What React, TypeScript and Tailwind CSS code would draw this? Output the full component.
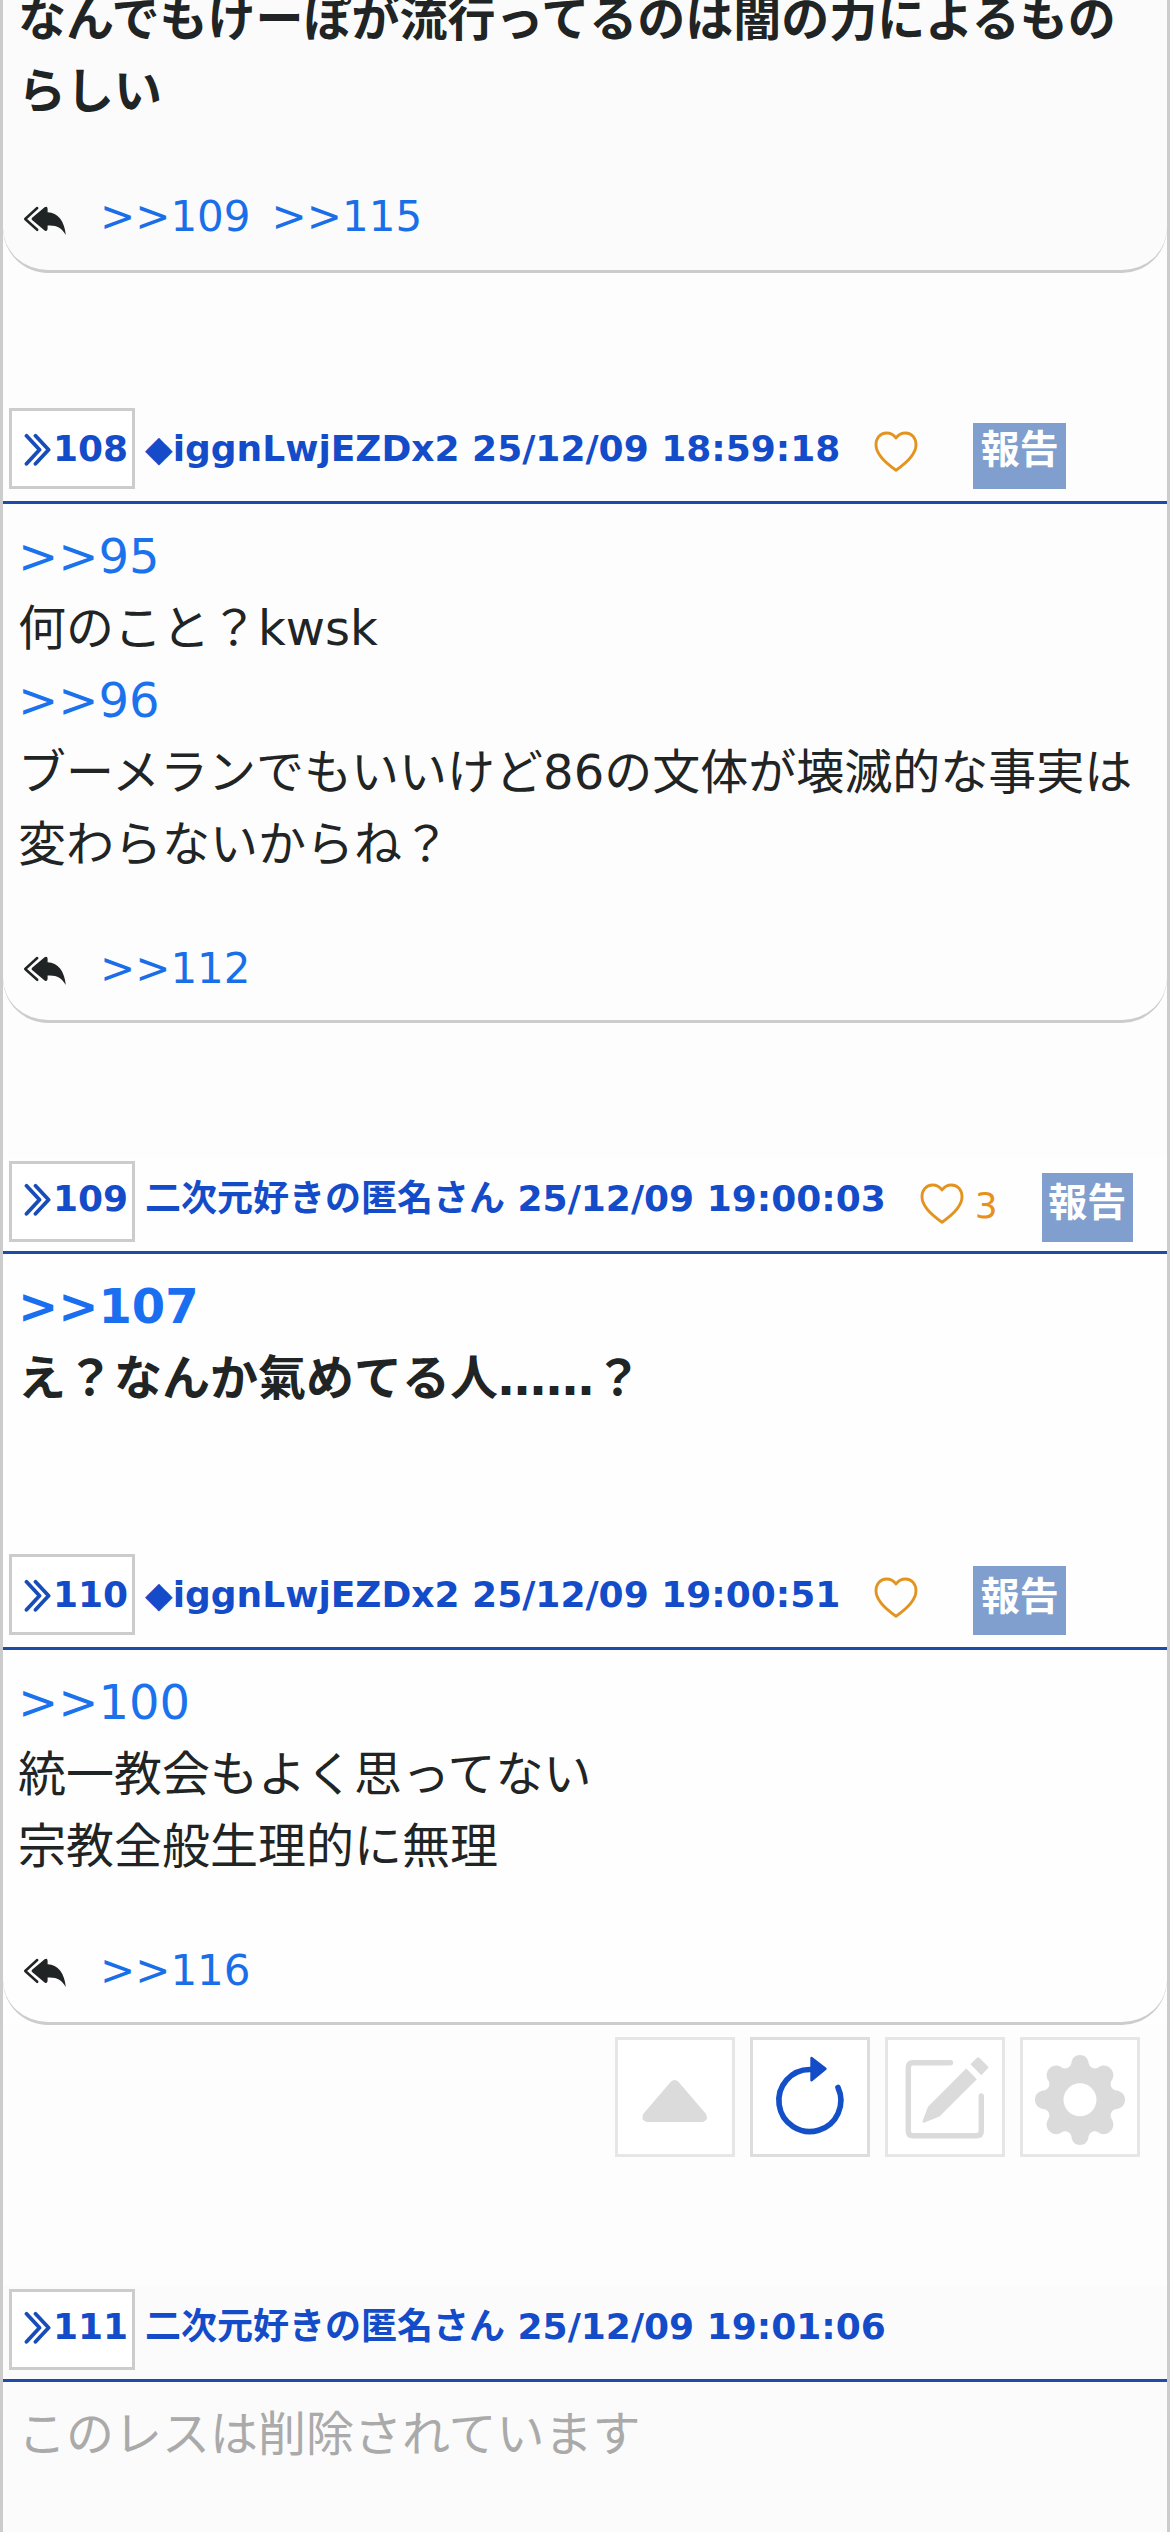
import React from "react";

const FONT = "font-['DejaVu_Sans','Noto_Sans_CJK_JP',sans-serif]";

function Chevrons() {
  return (
    <svg width="27" height="33" viewBox="0 0 27 33" fill="none" stroke="#184db8" strokeWidth="3.8" strokeLinecap="round" strokeLinejoin="round">
      <path d="M2.5 2.8 L15.5 16.8 L2.5 30.8" />
      <path d="M11.5 2.8 L24.6 16.8 L11.5 30.8" />
    </svg>
  );
}

function Heart() {
  return (
    <svg width="44" height="42" viewBox="0 0 44 42" fill="none" stroke="#e39420" strokeWidth="2.9" strokeLinejoin="round" className="shrink-0">
      <path d="M22 7 C19.5 3.4 16.5 2 12.5 2 C6.2 2 2 7.2 2 13.8 C2 23 11.5 32 22 39.2 C32.5 32 42 23 42 13.8 C42 7.2 37.8 2 31.5 2 C27.5 2 24.5 3.4 22 7 Z" />
    </svg>
  );
}

function ReplyIcon() {
  return (
    <svg width="44" height="30" viewBox="0 0 44 30" fill="none" className="shrink-0">
      <path d="M14.2 2 L2.2 13 L14.2 23.8" stroke="#212424" strokeWidth="2.5" strokeLinecap="round" strokeLinejoin="round" />
      <path d="M9.4 11.6 L21.6 1.2 Q24.4 -0.4 24.6 2.8 L24.6 6.2 C35 6.6 41.5 15 42.8 29 C38.5 21.6 33.5 19 24.6 19.6 L24.6 22.8 Q24.4 26 21.6 24.4 L9.4 14.2 Q7.8 12.9 9.4 11.6 Z" fill="#212424" />
    </svg>
  );
}

function Replies({ ids, low }: { ids: number[]; low?: boolean }) {
  return (
    <div className="flex h-[63px] items-center">
      <div className={`pl-[5px] ${low ? "pt-[8px]" : "pt-[4px]"}`}>
        <ReplyIcon />
      </div>
      <div className="ml-[33px] flex gap-[21px] text-[42px] leading-[63px] text-[#1a6fe8]">
        {ids.map((id) => (
          <a key={id}>{`>>${id}`}</a>
        ))}
      </div>
    </div>
  );
}

const REPORT_BOX = {
  a: "ml-[55px] mt-[15px] h-[66px] w-[93px]",
  b: "ml-[44px] mt-[12px] h-[69px] w-[91px] pt-[3px]",
  c: "ml-[55px] mt-[12px] h-[69px] w-[93px] pt-[4px]",
};

function Header({ id, name, gap, likes, report }: { id: number; name: string; gap: "tall" | "short"; likes?: string; report?: "a" | "b" | "c" }) {
  const tall = gap === "tall";
  return (
    <header className={`flex h-[96px] border-b-[3px] border-[#1c4ca8] pl-[6px] text-[36px] font-bold leading-[54px] text-[#134bc8] ${tall ? "" : "pt-[3px]"}`}>
      <div className={`flex h-[81px] w-[126px] shrink-0 border-[3px] border-[#ccc] bg-white pl-[12px] ${tall ? "pt-[11px]" : "pt-[8px]"}`}>
        <div className="pt-[11px]">
          <Chevrons />
        </div>
        <span className="ml-[2px]">{id}</span>
      </div>
      <div className={`ml-[10px] whitespace-pre ${tall ? "pt-[14px]" : "pt-[11px]"}`}>{name}</div>
      {report && (
        <>
          <div className={`ml-[34px] flex ${tall ? "pt-[23px]" : "pt-[22px]"}`}>
            <Heart />
            {likes && <span className="-mt-[4px] ml-[11px] font-normal text-[#e8901c]">{likes}</span>}
          </div>
          <div className={`bg-[#809fcf] text-center text-[39px] text-white ${REPORT_BOX[report]}`}>報告</div>
        </>
      )}
    </header>
  );
}

const BODY = "px-[15px] text-[48px] leading-[72px] text-[#212424]";
const CARD = "rounded-b-[45px] border-b-[3px] border-[#ccc]";
const LINK = "text-[#1a72ec]";

function IconButton({ active, children }: { active?: boolean; children: React.ReactNode }) {
  return (
    <button className={`flex size-[120px] items-center justify-center border-[3px] bg-white ${active ? "border-[#ddd]" : "border-[#e6e6e6]"}`}>
      {children}
    </button>
  );
}

function Toolbar() {
  return (
    <div className="absolute left-[612px] top-[2037px] flex gap-[15px]">
      <IconButton>
        <svg width="114" height="114" viewBox="0 0 114 114">
          <path d="M52.6 42 Q56.6 38 60.6 42 L87.6 73.5 Q91.5 79.5 85 82 L28.5 82 Q22 79.5 25.6 73.5 Z" fill="#dbdbdb" />
        </svg>
      </IconButton>
      <IconButton active>
        <svg width="114" height="114" viewBox="0 0 114 114">
          <path d="M57 29.5 A31 31 0 1 0 85 47.5" fill="none" stroke="#134fc6" strokeWidth="5.6" strokeLinecap="round" />
          <path d="M58.5 18 L72.5 28.8 L58.5 40.3 Z" fill="#134bc8" stroke="#134bc8" strokeWidth="2.4" strokeLinejoin="round" />
        </svg>
      </IconButton>
      <IconButton>
        <svg width="114" height="114" viewBox="0 0 114 114">
          <path d="M62.5 22.7 H25 Q20.3 22.7 20.3 27.5 V91 Q20.3 95.8 25 95.8 H88.5 Q93.3 95.8 93.3 91 V56" fill="none" stroke="#dbdbdb" strokeWidth="5.4" strokeLinecap="round" />
          <path d="M78.2 28.5 L88.8 39.2 L51.5 76.5 L36 82.7 Q34.2 83 34.6 81 L40 66.7 Z" fill="#dbdbdb" />
          <path d="M82.5 24.3 L89 17.8 Q90.2 16.8 91.3 17.8 L99.8 26.2 Q100.8 27.4 99.8 28.6 L93.3 35.2 Z" fill="#dbdbdb" />
        </svg>
      </IconButton>
      <IconButton>
        <svg width="114" height="114" viewBox="0 0 114 114" fill="#dbdbdb">
          <path
            fillRule="evenodd"
            d="M57 15 C62 15 65 18.4 65.5 22.6 C66.2 27.6 71.5 30 75.5 27.2 C79 24.8 84 24.8 87.5 28.4 C91 31.9 91.2 36.8 88.8 40.3 C86 44.4 88.4 49.8 93.4 50.5 C98 51 102 54.3 102 59.8 C102 65 98.2 68.5 93.4 69.1 C88.4 69.8 86 75.1 88.8 79.2 C91.2 82.8 91 87.8 87.5 91.3 C84 94.8 79 94.9 75.5 92.5 C71.4 89.6 66.2 92 65.5 97 C65 101.6 62 105 57 105 C52 105 49 101.6 48.5 97 C47.8 92 42.6 89.6 38.5 92.5 C35 94.9 30 94.8 26.5 91.3 C23 87.8 22.8 82.8 25.2 79.2 C28 75.1 25.6 69.8 20.6 69.1 C15.8 68.5 12 65 12 59.8 C12 54.3 16 51 20.6 50.5 C25.6 49.8 28 44.4 25.2 40.3 C22.8 36.8 23 31.9 26.5 28.4 C30 24.8 35 24.8 38.5 27.2 C42.5 30 47.8 27.6 48.5 22.6 C49 18.4 52 15 57 15 Z M57 43.3 A16.5 16.5 0 1 0 57 76.3 A16.5 16.5 0 1 0 57 43.3 Z"
          />
        </svg>
      </IconButton>
    </div>
  );
}

export default function App() {
  return (
    <div className={`relative h-[2532px] w-[1170px] overflow-hidden border-x-[3px] border-[#ccc] bg-[#fdfdfd] ${FONT}`}>
      <article className={`flow-root h-[273px] bg-[#fbfbfb] ${CARD} ${BODY}`}>
        <p className="-mt-[17px] font-bold">なんでもけーぽが流行ってるのは闇の力によるものらしい</p>
        <div className="mt-[58px]">
          <Replies ids={[109, 115]} low />
        </div>
      </article>

      <article className="mt-[135px]">
        <Header id={108} name="◆iggnLwjEZDx2 25/12/09 18:59:18" gap="tall" report="a" />
        <div className={`h-[519px] pt-[16px] ${CARD} ${BODY}`}>
          <p className={LINK}>&gt;&gt;95</p>
          <p>何のこと？kwsk</p>
          <p className={LINK}>&gt;&gt;96</p>
          <p>ブーメランでもいいけど86の文体が壊滅的な事実は変わらないからね？</p>
          <div className="mt-[57px]">
            <Replies ids={[112]} />
          </div>
        </div>
      </article>

      <article className="mt-[135px] bg-[#fefefe]">
        <Header id={109} name="二次元好きの匿名さん 25/12/09 19:00:03" gap="short" likes="3" report="b" />
        <div className={`h-[300px] pt-[16px] font-bold ${BODY}`}>
          <p className="text-[#1a6ff0]">&gt;&gt;107</p>
          <p>え？なんか氣めてる人……？</p>
        </div>
      </article>

      <article className="bg-[#fefefe]">
        <Header id={110} name="◆iggnLwjEZDx2 25/12/09 19:00:51" gap="tall" report="c" />
        <div className={`h-[375px] pt-[16px] ${CARD} ${BODY}`}>
          <p className={LINK}>&gt;&gt;100</p>
          <p>統一教会もよく思ってない</p>
          <p>宗教全般生理的に無理</p>
          <div className="mt-[57px]">
            <Replies ids={[116]} />
          </div>
        </div>
      </article>

      <article className="mt-[261px] bg-[#fbfbfb]">
        <Header id={111} name="二次元好きの匿名さん 25/12/09 19:01:06" gap="short" />
        <div className={`h-[150px] pt-[16px] ${BODY}`}>
          <p className="text-[#aaa]">このレスは削除されています</p>
        </div>
      </article>

      <Toolbar />
    </div>
  );
}
